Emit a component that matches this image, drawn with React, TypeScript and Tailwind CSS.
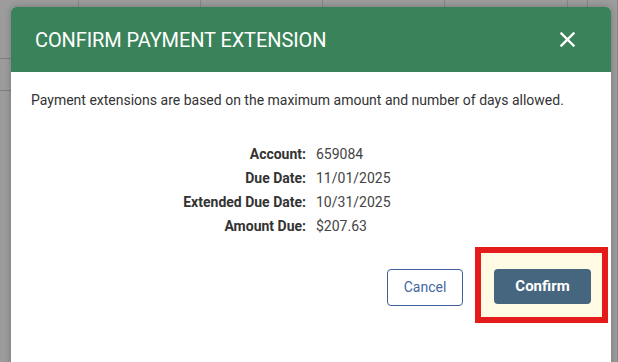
import React from "react";

const details = [
  { label: "Account:", value: "659084" },
  { label: "Due Date:", value: "11/01/2025" },
  { label: "Extended Due Date:", value: "10/31/2025" },
  { label: "Amount Due:", value: "$207.63" },
];

function CloseIcon() {
  return (
    <svg width="15" height="15" viewBox="0 0 15 15" fill="none">
      <path d="M1.5 1.5L13.5 13.5M13.5 1.5L1.5 13.5" stroke="white" strokeWidth="2.4" strokeLinecap="square" />
    </svg>
  );
}

export default function App() {
  return (
    <div className="relative w-[618px] h-[362px] overflow-hidden bg-[#959595] font-['Roboto',sans-serif]">
      {/* backdrop: the table behind the dialog */}
      <div className="absolute inset-0 grid grid-cols-[79px_122px_122px_122px_123px_20px_1fr]">
        {Array.from({ length: 7 }).map((_, i) => (
          <div key={i} className="border-r border-[#878787] bg-[#9c9c9c]" />
        ))}
      </div>
      <div className="absolute left-0 top-[58px] w-[12px] border-t border-[#7f7f7f]" />
      <div className="absolute left-0 top-[90px] w-[12px] border-t border-[#7f7f7f]" />

      {/* dialog */}
      <div className="absolute left-[11px] top-[7px] w-[600px] h-[380px] rounded-t-[5px] overflow-hidden bg-white shadow-[0_0_6px_rgba(0,0,0,0.25)]">
        <div className="h-[65px] bg-[#3a8259] flex items-center justify-between pl-[24px] pr-[36px]">
          <h2 className="text-[20px] leading-none text-white tracking-[-0.1px] pt-[1px]">CONFIRM PAYMENT EXTENSION</h2>
          <button className="flex items-center justify-center">
            <CloseIcon />
          </button>
        </div>

        <div className="pl-[20px] pt-[18px]">
          <p className="text-[14px] leading-[20px] text-[#333]">
            Payment extensions are based on the maximum amount and number of days allowed.
          </p>

          <div className="mt-[32px] grid grid-cols-[275px_1fr] gap-x-[10px] text-[14px] leading-[24px]">
            {details.map((d) => (
              <React.Fragment key={d.label}>
                <div className="text-right font-bold text-[#333]">{d.label}</div>
                <div className="text-[#444]">{d.value}</div>
              </React.Fragment>
            ))}
          </div>
        </div>

        <div className="mt-[9px] flex items-start justify-end gap-[12px] pr-[3px]">
          <button className="mt-[22px] w-[76px] h-[37px] rounded-[4px] border border-[#3d5f9c] bg-white text-[14px] text-[#4467a2]">
            Cancel
          </button>
          <div className="border-[6px] border-[#e31b1b] bg-[#fffae3] pt-[16px] pb-[13px] pl-[13px] pr-[11px]">
            <button className="w-[97px] h-[35px] rounded-[4px] bg-[#46667f] text-[15px] font-bold text-white">
              Confirm
            </button>
          </div>
        </div>
      </div>
    </div>
  );
}
